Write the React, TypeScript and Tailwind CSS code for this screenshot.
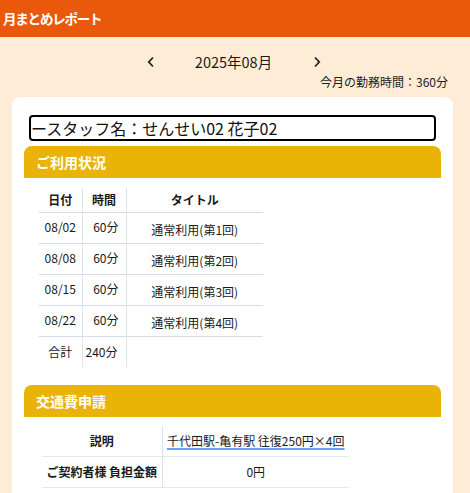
const font = { fontFamily: '"Noto Sans CJK JP", "Noto Sans", sans-serif' };

const usage = [
  { date: "08/02", time: "60分", title: "通常利用(第1回)" },
  { date: "08/08", time: "60分", title: "通常利用(第2回)" },
  { date: "08/15", time: "60分", title: "通常利用(第3回)" },
  { date: "08/22", time: "60分", title: "通常利用(第4回)" },
];

function SectionHeader({ title }: { title: string }) {
  return (
    <div className="h-[32px] bg-[#eab308] rounded-t-lg pl-3 flex items-center">
      <span className="text-white font-bold text-[14px]">{title}</span>
    </div>
  );
}

export default function App() {
  return (
    <div className="min-h-[493px] bg-[#ffecd6] text-[#1a1a1a]" style={font}>
      <header className="h-[37px] bg-[#ea580c] flex items-center px-[3px]">
        <h1 className="text-white font-bold text-[13.5px] tracking-[-1.2px]">
          月まとめレポート
        </h1>
      </header>

      <div className="pt-[15px] flex items-center justify-center h-[35px] pr-[2px]">
        <button className="w-[8px] flex justify-center text-[#222]">
          <svg width="8" height="12" viewBox="0 0 8 12" fill="none" stroke="currentColor" strokeWidth="1.8">
            <path d="M6 1.5 1.8 6 6 10.5" />
          </svg>
        </button>
        <span className="ml-[40px] mr-[41px] text-[14.5px] leading-[20px]">2025年08月</span>
        <button className="w-[8px] flex justify-center text-[#222]">
          <svg width="8" height="12" viewBox="0 0 8 12" fill="none" stroke="currentColor" strokeWidth="1.8">
            <path d="M2 1.5 6.2 6 2 10.5" />
          </svg>
        </button>
      </div>
      <div className="text-right pr-[22px] text-[12px] leading-[17px] mt-[1px]">今月の勤務時間：360分</div>

      <main className="mt-[7px] ml-3 mr-[17px] bg-white rounded-lg pt-[18px] pb-4">
        <div className="mx-[17px] h-[26px] border-2 border-black rounded-[4px] flex items-center text-[16px] leading-none text-[#111]">
          ースタッフ名：せんせい02 花子02
        </div>

        <section className="mx-3 mt-[5px]">
          <SectionHeader title="ご利用状況" />
          <table className="ml-[15px] mt-[10px] border-collapse text-[12px] leading-[17px]">
            <thead>
              <tr className="h-[24px] border-b border-[#d3dbe7]">
                <th className="w-[43px] font-bold border-r border-[#dbe3ee]">日付</th>
                <th className="w-[44px] font-bold border-r border-[#dbe3ee]">時間</th>
                <th className="w-[137px] font-bold">タイトル</th>
              </tr>
            </thead>
            <tbody>
              {usage.map((r) => (
                <tr key={r.date} className="h-[31px] border-b border-[#d3dbe7]">
                  <td className="text-center border-r border-[#dbe3ee] pb-[3px]">{r.date}</td>
                  <td className="text-right pr-[7px] border-r border-[#dbe3ee] pb-[3px]">{r.time}</td>
                  <td className="text-center pt-[3px]">{r.title}</td>
                </tr>
              ))}
              <tr className="h-[31px]">
                <td className="text-center border-r border-[#dbe3ee]">合計</td>
                <td className="text-right pr-[8px] border-r border-[#dbe3ee]">240分</td>
                <td></td>
              </tr>
            </tbody>
          </table>
        </section>

        <section className="mx-3 mt-[18px]">
          <SectionHeader title="交通費申請" />
          <table className="ml-[18px] mt-[9px] border-collapse text-[12px] leading-[17px]">
            <tbody>
              <tr className="h-[30px] border-b border-[#e2e8f0]">
                <th className="w-[120px] font-bold border-r border-[#dbe3ee]">説明</th>
                <td className="w-[187px] text-center">
                  <span className="underline decoration-[#60a5fa] decoration-2 underline-offset-[2px]">
                    千代田駅-亀有駅 往復250円×4回
                  </span>
                </td>
              </tr>
              <tr className="h-[31px] border-b border-[#e2e8f0]">
                <th className="font-bold border-r border-[#dbe3ee] whitespace-nowrap">ご契約者様 負担金額</th>
                <td className="text-center">0円</td>
              </tr>
            </tbody>
          </table>
        </section>
      </main>
    </div>
  );
}
